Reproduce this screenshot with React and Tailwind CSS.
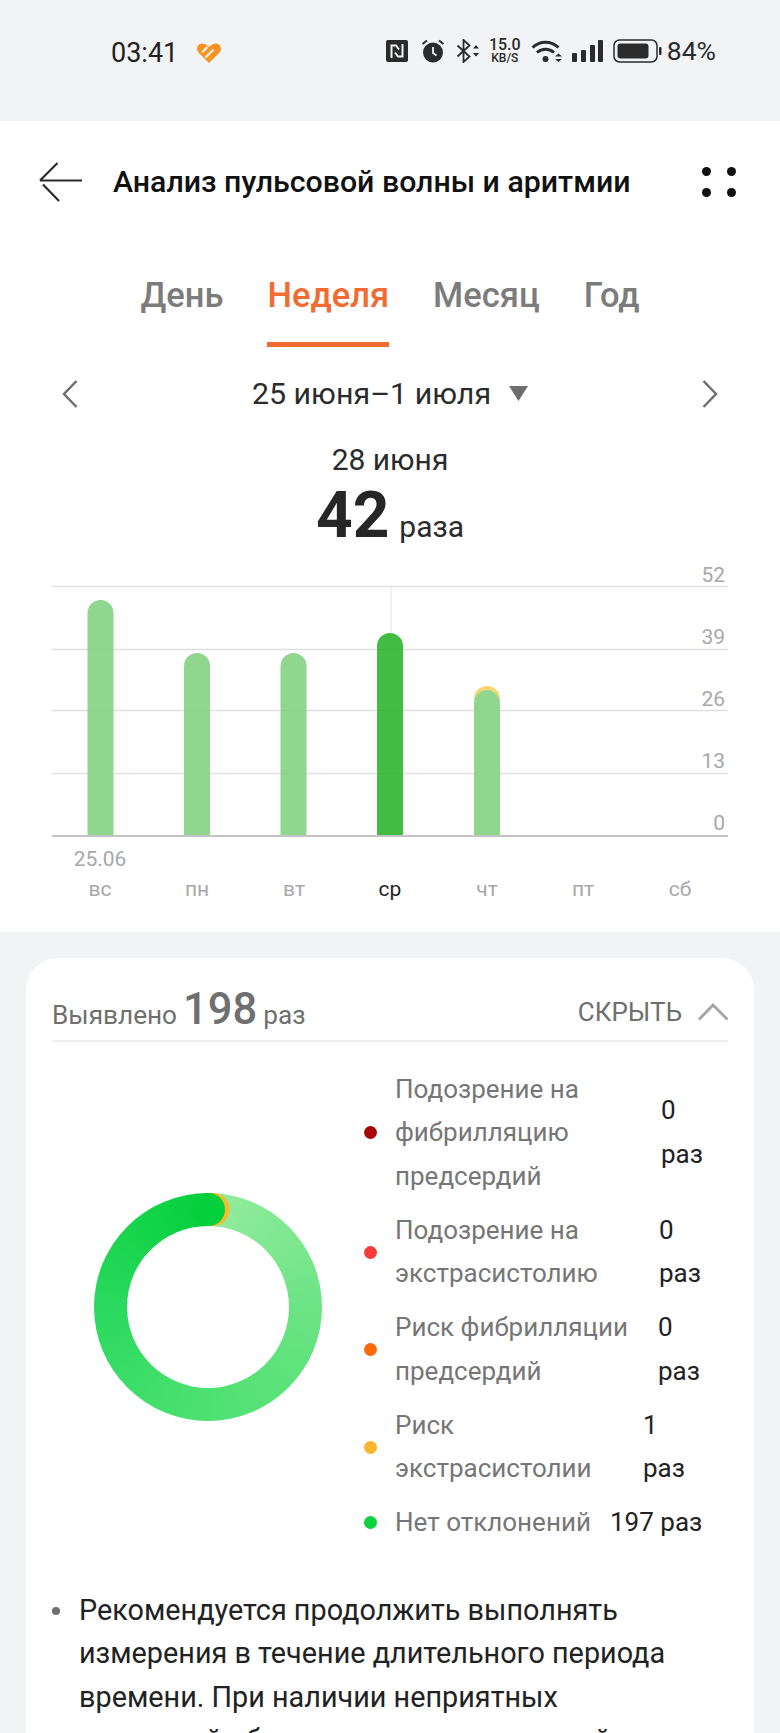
const font = 'font-[Roboto,sans-serif]'

// Значки строки состояния
function StatusIcons() {
  return (
    <div className="flex items-center">
      <svg width="22" height="22" viewBox="0 0 22 22">
        <rect width="22" height="22" rx="2" fill="#2b2b2b" />
        <path d="M5.500 18V5.500h4.500l3 4M16.500 4v12.500H12l-3-4" fill="none" stroke="#f1f3f5" strokeWidth="2" />
      </svg>
      <svg width="24" height="24" viewBox="0 0 24 24" className="ml-[13px]">
        <circle cx="12" cy="13.500" r="10" fill="#2b2b2b" />
        <path d="M12 8v6l3.500 2.500" fill="none" stroke="#f1f3f5" strokeWidth="1.800" />
        <path d="M1.500 5L6 1.500M22.500 5L18 1.500" stroke="#2b2b2b" strokeWidth="2" />
      </svg>
      <svg width="24" height="24" viewBox="0 0 24 24" className="ml-[11px]">
        <path d="M1.500 6.500l12 11-6 5.500V1l6 5.500-12 11" fill="none" stroke="#2b2b2b" strokeWidth="1.800" />
        <path d="M17 9.500l3-3.500 3 3.500zM17 14l3 3.500 3-3.500z" fill="#2b2b2b" />
      </svg>
      <div className="ml-[8px] flex w-[34px] flex-col items-center font-medium text-[#2b2b2b]">
        <span className="text-[16px] leading-[14px]">15.0</span>
        <span className="text-[12px] leading-[12px]">KB/S</span>
      </div>
      <svg width="32" height="24" viewBox="0 0 32 24" className="ml-[9px]">
        <path d="M1.500 8.500C9 1.500 20 1.500 27.500 8.500" fill="none" stroke="#2b2b2b" strokeWidth="3" />
        <path d="M6 13.500c5-4.500 12-4.500 17 0" fill="none" stroke="#2b2b2b" strokeWidth="3" />
        <circle cx="14.500" cy="20" r="3" fill="#2b2b2b" />
        <path d="M24 17.500l3.500-3 3.500 3zM24 20l3.500 3 3.500-3z" fill="#2b2b2b" />
      </svg>
      <svg width="31" height="22" viewBox="0 0 31 22" className="ml-[9px]">
        <rect x="0" y="13" width="5" height="9" rx="1" fill="#2b2b2b" />
        <rect x="9" y="10" width="5" height="12" rx="1" fill="#2b2b2b" />
        <rect x="18" y="5" width="5" height="17" rx="1" fill="#2b2b2b" />
        <rect x="26" y="0" width="5" height="22" rx="1" fill="#2b2b2b" />
      </svg>
      <svg width="49" height="24" viewBox="0 0 49 24" className="ml-[10px]">
        <rect x="1" y="1" width="43" height="22" rx="5.500" fill="none" stroke="#2b2b2b" strokeWidth="1.500" />
        <rect x="4.500" y="4.500" width="31" height="15" rx="3" fill="#2b2b2b" />
        <rect x="46" y="8" width="2.500" height="8" rx="1" fill="#2b2b2b" />
      </svg>
      <span className="ml-[5px] text-[26.500px] leading-none text-[#2b2b2b]">84%</span>
    </div>
  )
}

// Столбики недели и шкала справа
function WeekChart() {
  const grid = [26, 89, 150, 213]
  const scale = [
    { v: 52, y: 15 },
    { v: 39, y: 77 },
    { v: 26, y: 139 },
    { v: 13, y: 201 },
    { v: 0, y: 263 },
  ]
  const bars = [
    { x: 100.5, top: 40 },
    { x: 197, top: 93 },
    { x: 293.5, top: 93 },
    { x: 390, top: 73, active: true },
    { x: 487, top: 130 },
  ]
  const days = [
    { t: 'вс', x: 100 },
    { t: 'пн', x: 197 },
    { t: 'вт', x: 294 },
    { t: 'ср', x: 390, active: true },
    { t: 'чт', x: 487 },
    { t: 'пт', x: 583 },
    { t: 'сб', x: 680 },
  ]
  const bar = (x, top) => `M${x - 13} 275V${top + 13}a13 13 0 0 1 26 0V275z`

  return (
    <svg width="780" height="372" viewBox="0 0 780 372" className="block" fontFamily="Roboto, sans-serif">
      {grid.map((y) => (
        <line key={y} x1="52" x2="728" y1={y + 0.5} y2={y + 0.5} stroke="#e0e0e0" strokeWidth="1.500" />
      ))}
      <line x1="391" x2="391" y1="26" y2="75" stroke="#e4e4e4" />
      {/* жёлтая шапка под последним столбиком */}
      <path d={bar(487, 126)} fill="#fbd46a" />
      <path d={bar(487, 130)} fill="#ffffff" />
      {bars.map((b) => (
        <path key={b.x} d={bar(b.x, b.top)} fill={b.active ? '#2fb52f' : '#84d282'} fillOpacity="0.9" />
      ))}
      <line x1="52" x2="728" y1="276" y2="276" stroke="#c4c4c4" strokeWidth="2" />
      {scale.map((s) => (
        <text key={s.v} x="725" y={s.y + 7} textAnchor="end" fontSize="21" fill="#a8a8a8">
          {s.v}
        </text>
      ))}
      <text x="100" y="306" textAnchor="middle" fontSize="21" fill="#a8a8a8">
        25.06
      </text>
      {days.map((d) => (
        <text key={d.t} x={d.x} y="336" textAnchor="middle" fontSize="21" fill={d.active ? '#222222' : '#a8a8a8'}>
          {d.t}
        </text>
      ))}
    </svg>
  )
}

function Donut() {
  return (
    <div className="relative mt-[2px] flex h-[228px] w-[228px] shrink-0 items-center justify-center rounded-full bg-[conic-gradient(#94ec9e,#6ce484_25%,#4ee172_50%,#2ad95e_75%,#04d03b)]">
      <div className="h-[162px] w-[162px] rounded-full bg-white" />
      <svg width="228" height="228" viewBox="0 0 228 228" className="absolute left-0 top-0">
        <circle cx="119" cy="16.500" r="16.500" fill="#f9b92d" />
        <circle cx="114.500" cy="16.500" r="16.500" fill="#04d03b" />
      </svg>
    </div>
  )
}

function LegendRow({ color, width, label, value, valueWidth }) {
  return (
    <div className="flex items-center">
      <span className={`h-[13px] w-[13px] shrink-0 rounded-full ${color}`} />
      <span className={`ml-[18px] shrink-0 text-[26px] leading-[43.500px] text-[#767676] ${width}`}>{label}</span>
      <span className={`text-[26px] leading-[43.500px] text-[#222222] ${valueWidth}`}>{value}</span>
    </div>
  )
}

export default function App() {
  return (
    <div className={`h-[1733px] w-[780px] overflow-hidden bg-[#f1f3f5] ${font}`}>
      {/* Строка состояния */}
      <div className="flex h-[121px] items-start justify-between pl-[111px] pr-[64px] pt-[38px]">
        <div className="flex items-center">
          <span className="text-[27px] leading-[30px] text-[#222222]">03:41</span>
          <svg width="24" height="20" viewBox="0 0 24 20" className="ml-[19px]">
            <path d="M12 20L1.500 9.500C-1 6.500 0 2.500 3 1c3-1.500 6 0 9 3 3-3 6-4.500 9-3 3 1.500 4 5.500 1.500 8.500z" fill="#f7931e" />
            <path d="M5 9.500l5.500-5.500M8.500 14.500l8-8" stroke="#f1f3f5" strokeWidth="2.200" />
          </svg>
        </div>
        <StatusIcons />
      </div>

      <div className="flex flex-col bg-white">
        {/* Заголовок */}
        <div className="flex h-[122px] items-center pl-[38px] pr-[44px]">
          <svg width="45" height="40" viewBox="0 0 45 40" className="shrink-0">
            <path d="M44 18.500H2M2 18.500L19.500 1M5 22.500L21 39" fill="none" stroke="#2b2b2b" strokeWidth="2.200" />
          </svg>
          <h1 className="ml-[30px] flex-1 text-[30.300px] font-medium leading-[36px] text-[#111111]">
            Анализ пульсовой волны и аритмии
          </h1>
          <div className="grid grid-cols-2 gap-x-[16px] gap-y-[12px]">
            <span className="h-[9px] w-[9px] rounded-full bg-[#111111]" />
            <span className="h-[9px] w-[9px] rounded-full bg-[#111111]" />
            <span className="h-[9px] w-[9px] rounded-full bg-[#111111]" />
            <span className="h-[9px] w-[9px] rounded-full bg-[#111111]" />
          </div>
        </div>

        {/* Вкладки периода */}
        <div className="mt-[32px] flex justify-center gap-[44px] text-[34.500px] font-medium leading-[40px] text-[#7c7c7c]">
          <span>День</span>
          <div className="flex flex-col text-[#f26b30]">
            <span>Неделя</span>
            <span className="mt-[27px] h-[4.500px] bg-[#f26b30]" />
          </div>
          <span>Месяц</span>
          <span>Год</span>
        </div>

        {/* Выбор недели */}
        <div className="mt-[27px] flex h-[40px] items-center justify-between px-[62px]">
          <svg width="16" height="28" viewBox="0 0 16 28">
            <path d="M14.500 1L2 14l12.500 13" fill="none" stroke="#6f6f6f" strokeWidth="2.500" />
          </svg>
          <div className="flex items-center">
            <span className="text-[30.400px] leading-[40px] text-[#2b2b2b]">25 июня–1 июля</span>
            <svg width="19" height="15" viewBox="0 0 19 15" className="ml-[18px]">
              <path d="M0 0h19l-9.500 15z" fill="#6e6e6e" />
            </svg>
          </div>
          <svg width="16" height="28" viewBox="0 0 16 28">
            <path d="M1.500 1L14 14 1.500 27" fill="none" stroke="#6f6f6f" strokeWidth="2.500" />
          </svg>
        </div>

        <div className="mt-[26px] text-center text-[30px] leading-[40px] text-[#2b2b2b]">28 июня</div>
        <div className="mt-[4px] flex items-baseline justify-center">
          <span className="text-[64px] font-bold leading-[64px] text-[#262626]">42</span>
          <span className="ml-[10px] text-[30px] leading-[52px] text-[#2b2b2b]">раза</span>
        </div>

        <div className="mt-[7px]">
          <WeekChart />
        </div>
      </div>

      {/* Карточка со сводкой */}
      <div className="mx-[26px] mt-[26px] rounded-t-[32px] bg-white px-[26px]">
        <div className="flex h-[84px] items-start justify-between border-b-2 border-[#f0f0f0] pt-[27px]">
          <div className="flex items-baseline text-[#6f6f6f]">
            <span className="text-[26.200px]">Выявлено</span>
            <span className="ml-[6px] text-[43.500px] font-medium leading-[50px]">198</span>
            <span className="ml-[6px] text-[26.200px]">раз</span>
          </div>
          <div className="mt-[9px] flex items-center">
            <span className="text-[26px] leading-[36px] text-[#6f6f6f]">СКРЫТЬ</span>
            <svg width="32" height="18" viewBox="0 0 32 18" className="ml-[14px]">
              <path d="M3 16.500L17 2l14.500 14.500" fill="none" stroke="#a3a3a3" strokeWidth="2.800" />
            </svg>
          </div>
        </div>

        <div className="ml-[42px] mt-[26px] flex items-center">
          <Donut />
          <div className="ml-[42px] flex flex-col gap-[10.500px]">
            <LegendRow color="bg-[#a80606]" width="w-[266px]" valueWidth="w-[46px]" label="Подозрение на фибрилляцию предсердий" value="0 раз" />
            <LegendRow color="bg-[#f53b3b]" width="w-[264px]" valueWidth="w-[46px]" label="Подозрение на экстрасистолию" value="0 раз" />
            <LegendRow color="bg-[#f96a0c]" width="w-[263px]" valueWidth="w-[46px]" label="Риск фибрилляции предсердий" value="0 раз" />
            <LegendRow color="bg-[#fbb52e]" width="w-[248px]" valueWidth="w-[46px]" label="Риск экстрасистолии" value="1 раз" />
            <LegendRow color="bg-[#0ed13f]" width="w-[215px]" valueWidth="w-[100px]" label="Нет отклонений" value="197 раз" />
          </div>
        </div>

        {/* Рекомендация */}
        <div className="mt-[44px] flex">
          <span className="mt-[18px] h-[8px] w-[8px] shrink-0 rounded-full bg-[#6f6f6f]" />
          <p className="ml-[19px] w-[625px] text-[28.800px] leading-[43.500px] text-[#222222]">
            Рекомендуется продолжить выполнять измерения в течение длительного периода времени. При наличии неприятных
            ощущений обратитесь за медицинской помощью.
          </p>
        </div>
      </div>
    </div>
  )
}
